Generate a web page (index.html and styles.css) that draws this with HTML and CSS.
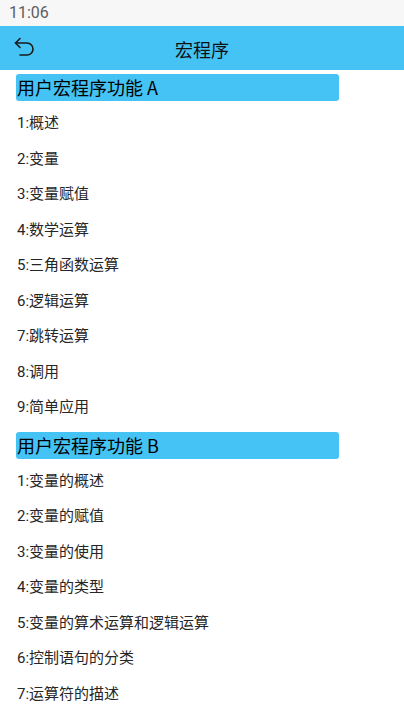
FILE: index.html
```html
<!DOCTYPE html>
<html lang="zh-CN">
<head>
<meta charset="utf-8">
<title>宏程序</title>
<link rel="stylesheet" href="styles.css">
</head>
<body>
<div class="status">11:06</div>
<header class="appbar">
  <svg class="back" width="24" height="24" viewBox="0 0 24 24" fill="none" stroke="#1a1a1a" stroke-width="1.6" stroke-linecap="round" stroke-linejoin="round">
    <path d="M8 2.5 L3.5 7 L8 11.5"/>
    <path d="M3.5 7 H15 A6 6 0 0 1 15 19 H8"/>
  </svg>
  <div class="title">宏程序</div>
</header>
<main class="content">
  <section class="group">
    <h2 class="head">用户宏程序功能 A</h2>
    <div class="item">1:概述</div>
    <div class="item">2:变量</div>
    <div class="item">3:变量赋值</div>
    <div class="item">4:数学运算</div>
    <div class="item">5:三角函数运算</div>
    <div class="item">6:逻辑运算</div>
    <div class="item">7:跳转运算</div>
    <div class="item">8:调用</div>
    <div class="item">9:简单应用</div>
  </section>
  <section class="group">
    <h2 class="head">用户宏程序功能 B</h2>
    <div class="item">1:变量的概述</div>
    <div class="item">2:变量的赋值</div>
    <div class="item">3:变量的使用</div>
    <div class="item">4:变量的类型</div>
    <div class="item">5:变量的算术运算和逻辑运算</div>
    <div class="item">6:控制语句的分类</div>
    <div class="item">7:运算符的描述</div>
  </section>
</main>
</body>
</html>
```
FILE: styles.css
```css
* { box-sizing: border-box; }
html, body {
  margin: 0;
  padding: 0;
  background: #ffffff;
  width: 404px;
  height: 720px;
  overflow: hidden;
  font-family: Roboto, "Noto Sans CJK SC", sans-serif;
}
.status {
  height: 26px;
  background: #f7f7f7;
  color: #5e5e5e;
  font-size: 16px;
  line-height: 26px;
  padding-left: 9px;
}
.appbar {
  height: 44px;
  background: #45c3f5;
  display: flex;
  align-items: center;
  position: relative;
}
.back {
  position: absolute;
  left: 12px;
  top: 10px;
}
.title {
  flex: 1;
  text-align: center;
  font-size: 18px;
  color: #111;
  font-family: "Noto Sans CJK SC", sans-serif;
  padding-top: 2px;
}
.content {
  padding: 0 16px;
}
.group {
  display: flex;
  flex-direction: column;
}
.group + .group .head {
  margin-top: 11px;
}
.head {
  margin: 4px 0 0;
  width: 323px;
  height: 27px;
  background: #45c3f5;
  border-radius: 3px;
  font-weight: normal;
  font-size: 18px;
  line-height: 27px;
  color: #000;
  padding-left: 1px;
  font-family: "Noto Sans CJK SC", Roboto, sans-serif;
  white-space: nowrap;
}
.item {
  height: 35.5px;
  padding-top: 14px;
  padding-left: 1px;
  font-size: 15px;
  line-height: 16px;
  color: #262626;
  font-family: Roboto, "Noto Sans CJK SC", sans-serif;
}
```
